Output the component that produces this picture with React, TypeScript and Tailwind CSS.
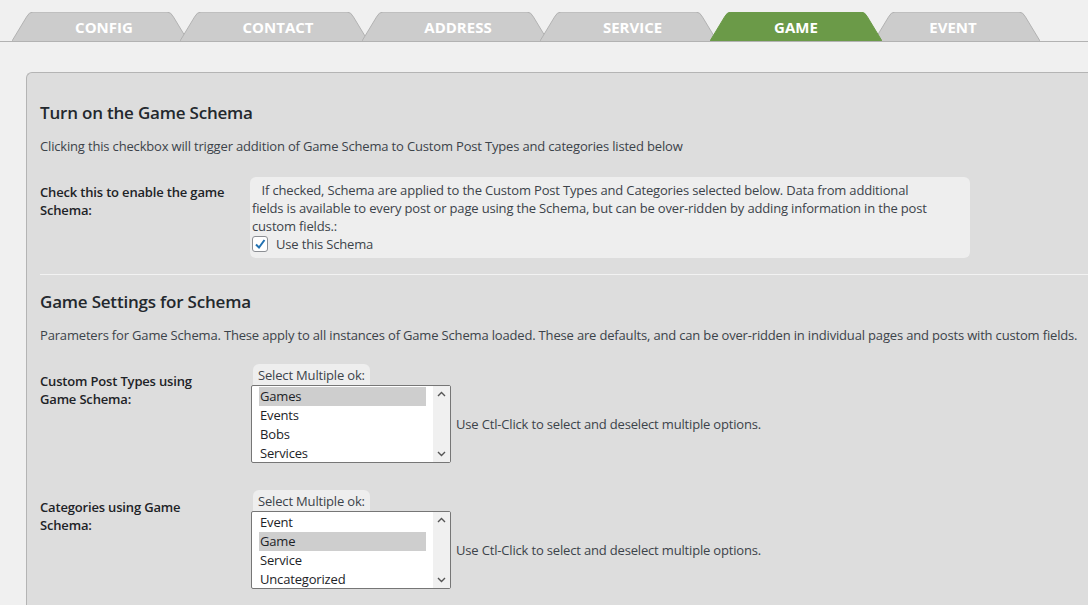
import React from "react";

const tabs = [
  { label: "CONFIG", w: 176, ml: 0, dx: 8 },
  { label: "CONTACT", w: 188, ml: -8, dx: 8 },
  { label: "ADDRESS", w: 186, ml: -6, dx: 6 },
  { label: "SERVICE", w: 177, ml: -8, dx: 8 },
  { label: "GAME", w: 172, ml: -7, dx: 0, active: true },
  { label: "EVENT", w: 166, ml: -8, dx: -8 },
];

function Tab({ label, w, ml, dx, active }: { label: string; w: number; ml: number; dx: number; active?: boolean }) {
  const h = 29;
  const s = 16;
  const r = 5;
  const d = `M0,${h} L${s - 1.5},${r} Q${s + 1},0 ${s + r},0 L${w - s - r},0 Q${w - s - 1},0 ${w - s + 1.5},${r} L${w},${h}`;
  return (
    <div
      className={`relative flex h-[29px] shrink-0 items-center justify-center ${active ? "z-10" : ""}`}
      style={{ width: w, marginLeft: ml }}
    >
      <svg className="absolute inset-0" width={w} height={h} viewBox={`0 0 ${w} ${h}`}>
        <path d={d + " Z"} fill={active ? "#6b9a48" : "#cccccc"} />
        <path d={d} fill="none" stroke={active ? "#6b9a48" : "#b2b2b2"} strokeWidth="1" />
      </svg>
      <span
        className="relative pt-[2px] text-[15px] font-bold text-white"
        style={{ paddingLeft: dx > 0 ? dx : 0, paddingRight: dx < 0 ? -dx : 0 }}
      >
        {label}
      </span>
    </div>
  );
}

function ChevronUp() {
  return (
    <svg width="9" height="6" viewBox="0 0 9 6">
      <path d="M1 5 L4.5 1.5 L8 5" fill="none" stroke="#555" strokeWidth="1.4" />
    </svg>
  );
}
function ChevronDown() {
  return (
    <svg width="9" height="6" viewBox="0 0 9 6">
      <path d="M1 1 L4.5 4.5 L8 1" fill="none" stroke="#555" strokeWidth="1.4" />
    </svg>
  );
}

function MultiSelect({ options, selected }: { options: string[]; selected: string }) {
  return (
    <div className="flex flex-col items-start">
      <div className="ml-[2px] rounded-t-[6px] bg-[#eeeeee] px-[5px] pt-[2px] leading-[19px] text-[#3c434a]">
        Select Multiple ok:
      </div>
      <div className="flex h-[78px] w-[200px] rounded-[2px] border border-[#767676] bg-white">
        <div className="flex flex-1 flex-col pl-[7px] pr-[7px] pt-[1px]">
          {options.map((o) => (
            <div
              key={o}
              className={`h-[19px] pl-[1px] leading-[19px] text-[#1d2327] ${o === selected ? "bg-[#cecece]" : ""}`}
            >
              {o}
            </div>
          ))}
        </div>
        <div className="flex w-[17px] flex-col items-center justify-between bg-[#f0f0f0] py-[5px]">
          <ChevronUp />
          <ChevronDown />
        </div>
      </div>
    </div>
  );
}

export default function App() {
  return (
    <div
      className="h-[605px] w-[1088px] overflow-hidden bg-[#f0f0f0] text-[13px] tracking-[-0.17px] text-[#3c434a]"
      style={{ fontFamily: '"Open Sans", "Noto Sans", sans-serif' }}
    >
      <div className="flex border-b border-[#b2b2b2] pl-[12px] pt-[12px] tracking-normal">
        {tabs.map((t) => (
          <Tab key={t.label} {...t} />
        ))}
      </div>
      <div className="pl-[26px] pt-[30px]">
        <div className="rounded-tl-[6px] border-l border-t border-[#b4b4b4] bg-[#dddddd] pb-[30px] pl-[13px] pt-[28px]">
          <h2 className="text-[17px] font-semibold leading-[24px] tracking-[-0.2px] text-[#23282d]">Turn on the Game Schema</h2>
          <p className="mt-[12px] leading-[18px]">
            Clicking this checkbox will trigger addition of Game Schema to Custom Post Types and categories listed below
          </p>
          <div className="mt-[22px] flex">
            <div className="w-[210px] pt-[6px] font-semibold leading-[18px] text-[#1d2327]">
              Check this to enable the game
              <br />
              Schema:
            </div>
            <div className="w-[720px] rounded-[6px] bg-[#eeeeee] px-[2px] pb-[5px] pt-[4px] leading-[18px]">
              <div className="whitespace-nowrap">
                &nbsp;&nbsp;&nbsp;If checked, Schema are applied to the Custom Post Types and Categories selected below. Data from additional
                <br />
                fields is available to every post or page using the Schema, but can be over-ridden by adding information in the post
                <br />
                custom fields.:
              </div>
              <div className="flex items-center gap-[8px]">
                <span className="flex h-[16px] w-[16px] items-center justify-center rounded-[3px] border border-[#8c8f94] bg-white">
                  <svg width="12" height="12" viewBox="0 0 12 12">
                    <path d="M2 6.5 L5 9.5 L10.5 2" fill="none" stroke="#2271b1" strokeWidth="2" />
                  </svg>
                </span>
                <span>Use this Schema</span>
              </div>
            </div>
          </div>
          <div className="mt-[16px] border-t border-[#f2f2f2]" />
          <h2 className="mt-[15px] text-[17px] font-semibold leading-[24px] tracking-[-0.2px] text-[#23282d]">Game Settings for Schema</h2>
          <p className="mt-[12px] whitespace-nowrap leading-[18px]">
            Parameters for Game Schema. These apply to all instances of Game Schema loaded. These are defaults, and can be over-ridden in individual pages and posts with custom fields.
          </p>
          <div className="mt-[20px] flex items-start">
            <div className="w-[211px] pt-[8px] font-semibold leading-[18px] text-[#1d2327]">
              Custom Post Types using
              <br />
              Game Schema:
            </div>
            <div className="flex items-end">
              <MultiSelect options={["Games", "Events", "Bobs", "Services"]} selected="Games" />
              <span className="mb-[30px] ml-[5px] leading-[18px]">Use Ctl-Click to select and deselect multiple options.</span>
            </div>
          </div>
          <div className="mt-[27px] flex items-start">
            <div className="w-[211px] pt-[8px] font-semibold leading-[18px] text-[#1d2327]">
              Categories using Game
              <br />
              Schema:
            </div>
            <div className="flex items-end">
              <MultiSelect options={["Event", "Game", "Service", "Uncategorized"]} selected="Game" />
              <span className="mb-[30px] ml-[5px] leading-[18px]">Use Ctl-Click to select and deselect multiple options.</span>
            </div>
          </div>
        </div>
      </div>
    </div>
  );
}
